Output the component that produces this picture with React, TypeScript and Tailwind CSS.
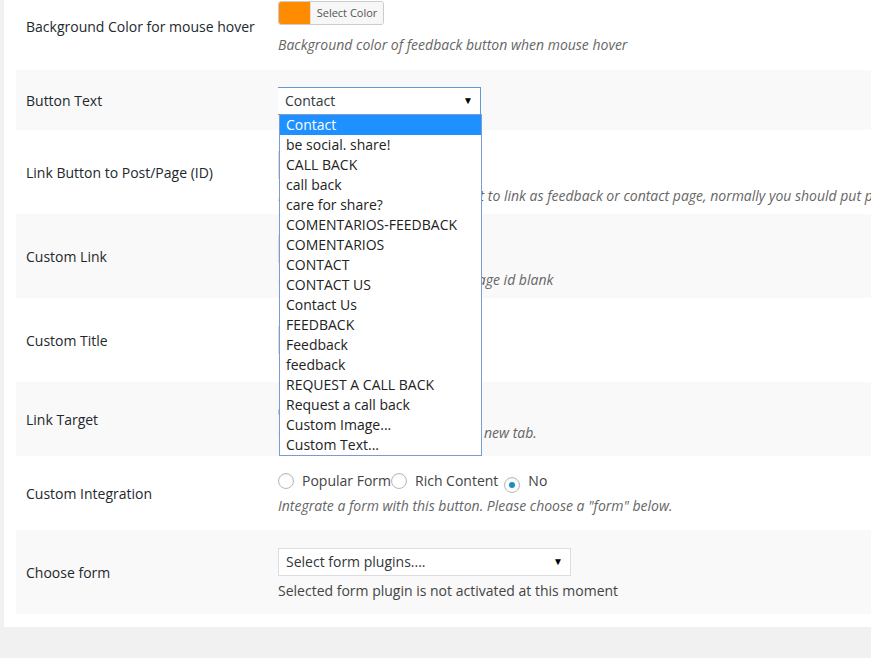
import React from "react";

const opts = ["Contact","be social. share!","CALL BACK","call back","care for share?","COMENTARIOS-FEEDBACK","COMENTARIOS","CONTACT","CONTACT US","Contact Us","FEEDBACK","Feedback","feedback","REQUEST A CALL BACK","Request a call back","Custom Image...","Custom Text..."];

function Row({ label, gray, h, children }: { label: string; gray?: boolean; h: string; children?: React.ReactNode }) {
  return (
    <div className={`flex items-center ${h} ${gray ? "bg-[#f9f9f9]" : "bg-white"}`}>
      <div className="w-[262px] shrink-0 pl-[10px] text-[14px] text-[#23282d]">{label}</div>
      <div className="flex-1 min-w-0 overflow-hidden whitespace-nowrap">{children}</div>
    </div>
  );
}

const Radio = ({ on }: { on?: boolean }) => (
  <span className="inline-flex w-[16px] h-[16px] rounded-full border border-[#b4b9be] bg-white items-center justify-center align-[-3px] shadow-[inset_0_1px_2px_rgba(0,0,0,0.07)]">
    {on && <span className="w-[6px] h-[6px] rounded-full bg-[#1e8cbe]" />}
  </span>
);

const Desc = ({ children }: { children: React.ReactNode }) => (
  <div className="text-[14px] italic text-[#666]">{children}</div>
);

export default function App() {
  return (
    <div className="w-[871px] h-[658px] bg-[#f1f1f1] overflow-hidden relative text-[#444]" style={{ fontFamily: '"Open Sans", sans-serif' }}>
      <div className="ml-[4px] bg-white h-[627px] pl-[12px] flex flex-col">
        <div className="flex h-[70px] bg-white">
          <div className="w-[262px] shrink-0 pl-[10px] pt-[16px] text-[14px] text-[#23282d]">Background Color for mouse hover</div>
          <div className="flex flex-col gap-[9px] pt-[1px] whitespace-nowrap">
            <div className="flex h-[24px] w-[106px] border border-[#ccc] rounded-[3px] overflow-hidden">
              <div className="w-[31px] bg-[#ff8c00]" />
              <div className="flex-1 bg-[#f7f7f7] text-[11px] text-[#555] flex items-center justify-center border-l border-[#ddd]">Select Color</div>
            </div>
            <Desc>Background color of feedback button when mouse hover</Desc>
          </div>
        </div>
        <Row label="Button Text" gray h="h-[60px]">
          <div className="w-[204px] h-[28px] border border-[#5b9dd9] bg-white flex items-center justify-between px-[7px] text-[14px] text-[#32373c] mt-[1px] -ml-[1px]">
            <span>Contact</span><span className="text-[10px] text-black">▼</span>
          </div>
        </Row>
        <Row label="Link Button to Post/Page (ID)" h="h-[84px]">
          <div className="flex flex-col gap-[6px] mt-[12px]">
            <div className="h-[28px] w-[180px] border border-[#ddd]" />
            <Desc>Put post or page id that you want to link as feedback or contact page, normally you should put page id here</Desc>
          </div>
        </Row>
        <Row label="Custom Link" gray h="h-[84px]">
          <div className="flex flex-col gap-[6px] mt-[12px]">
            <div className="h-[28px] w-[180px] border border-[#ddd] bg-white" />
            <Desc>Custom link overrides the post/page id blank</Desc>
          </div>
        </Row>
        <Row label="Custom Title" h="h-[84px]">
          <div className="h-[28px] w-[180px] border border-[#ddd]" />
        </Row>
        <Row label="Link Target" gray h="h-[74px]">
          <div className="flex flex-col gap-[2px]">
            <div className="text-[14px] text-[#444]"><Radio on /> <span className="ml-[4px]">Open the link in same tab</span></div>
            <Desc>Open link in the same window or new tab.</Desc>
          </div>
        </Row>
        <Row label="Custom Integration" h="h-[74px]">
          <div className="flex flex-col gap-[2px] -mt-[2px]">
            <div className="text-[14px] text-[#444] flex items-center">
              <Radio /><span className="ml-[8px]">Popular Form</span>
              <Radio /><span className="ml-[8px]">Rich Content</span>
              <span className="ml-[6px]"><Radio on /></span><span className="ml-[8px]">No</span>
            </div>
            <Desc>Integrate a form with this button. Please choose a "form" below.</Desc>
          </div>
        </Row>
        <Row label="Choose form" gray h="h-[84px]">
          <div className="flex flex-col gap-[4px] mt-[4px]">
            <div className="w-[293px] h-[28px] border border-[#ddd] bg-white flex items-center justify-between px-[7px] text-[14px] text-[#32373c]">
              <span>Select form plugins....</span><span className="text-[10px] text-black">▼</span>
            </div>
            <div className="text-[14px] text-[#444]">Selected form plugin is not activated at this moment</div>
          </div>
        </Row>
      </div>
      <div className="absolute left-[279px] top-[114px] w-[203px] bg-white border border-[#7a9cd3] text-[14px] text-[#222] leading-[20px]">
        {opts.map((o, i) => (
          <div key={i} className={`px-[6px] h-[20px] ${i === 0 ? "bg-[#1e90ff] text-white" : ""}`}>{o}</div>
        ))}
      </div>
    </div>
  );
}
